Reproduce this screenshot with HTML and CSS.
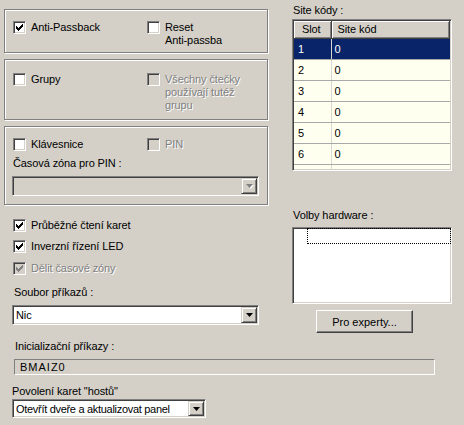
FILE: index.html
```html
<!DOCTYPE html>
<html lang="cs">
<head>
    <meta charset="UTF-8">
    <title>Nastavení čtečky</title>
    <link rel="stylesheet" href="styles.css">
</head>
<body>

<div class="dlg">
    <div class="top">
        <div class="left">
            <!-- Anti-Passback -->
            <div class="group g1">
                <div class="chk w134">
                    <span class="cb"><svg width="7" height="7" viewBox="0 0 7 7"><path d="M0 2h1v3H0zM1 3h1v3H1zM2 4h1v3H2zM3 3h1v3H3zM4 2h1v3H4zM5 1h1v3H5zM6 0h1v3H6z"/></svg></span>
                    <span>Anti-Passback</span>
                </div>
                <div class="chk">
                    <span class="cb"></span>
                    <span>Reset<br>Anti-passba</span>
                </div>
            </div>

            <!-- Grupy -->
            <div class="group g2">
                <div class="chk w134">
                    <span class="cb"></span>
                    <span>Grupy</span>
                </div>
                <div class="chk off">
                    <span class="cb"></span>
                    <span>Všechny čtečky<br>používají tutéž<br>grupu</span>
                </div>
            </div>

            <!-- Klávesnice -->
            <div class="group g3">
                <div class="row">
                    <div class="chk w134">
                        <span class="cb"></span>
                        <span>Klávesnice</span>
                    </div>
                    <div class="chk off">
                        <span class="cb"></span>
                        <span>PIN</span>
                    </div>
                </div>
                <div class="lbl pin-lbl">Časová zóna pro PIN :</div>
                <div class="combo off pin-combo">
                    <span class="val"></span>
                    <span class="drop"><svg width="7" height="4" viewBox="0 0 7 4"><path d="M0 0h7L3.5 4z"/></svg></span>
                </div>
            </div>

            <div class="opts">
                <div class="chk">
                    <span class="cb"><svg width="7" height="7" viewBox="0 0 7 7"><path d="M0 2h1v3H0zM1 3h1v3H1zM2 4h1v3H2zM3 3h1v3H3zM4 2h1v3H4zM5 1h1v3H5zM6 0h1v3H6z"/></svg></span>
                    <span>Průběžné čtení karet</span>
                </div>
                <div class="chk">
                    <span class="cb"><svg width="7" height="7" viewBox="0 0 7 7"><path d="M0 2h1v3H0zM1 3h1v3H1zM2 4h1v3H2zM3 3h1v3H3zM4 2h1v3H4zM5 1h1v3H5zM6 0h1v3H6z"/></svg></span>
                    <span>Inverzní řízení LED</span>
                </div>
                <div class="chk off last">
                    <span class="cb"><svg width="7" height="7" viewBox="0 0 7 7"><path d="M0 2h1v3H0zM1 3h1v3H1zM2 4h1v3H2zM3 3h1v3H3zM4 2h1v3H4zM5 1h1v3H5zM6 0h1v3H6z"/></svg></span>
                    <span>Dělit časové zóny</span>
                </div>
            </div>

            <div class="lbl soubor-lbl">Soubor příkazů :</div>
            <div class="combo nic-combo">
                <span class="val">Nic</span>
                <span class="drop"><svg width="7" height="4" viewBox="0 0 7 4"><path d="M0 0h7L3.5 4z"/></svg></span>
            </div>
        </div>

        <div class="right">
            <div class="lbl site-lbl">Site kódy :</div>
            <div class="grid">
                <table>
                    <thead>
                        <tr><th class="c1">Slot</th><th>Site kód</th></tr>
                    </thead>
                    <tbody>
                        <tr class="sel"><td class="c1">1</td><td>0</td></tr>
                        <tr><td class="c1">2</td><td>0</td></tr>
                        <tr><td class="c1">3</td><td>0</td></tr>
                        <tr><td class="c1">4</td><td>0</td></tr>
                        <tr><td class="c1">5</td><td>0</td></tr>
                        <tr><td class="c1">6</td><td>0</td></tr>
                        <tr><td class="c1"></td><td></td></tr>
                    </tbody>
                </table>
            </div>

            <div class="lbl hw-lbl">Volby hardware :</div>
            <div class="listbox">
                <div class="focus"></div>
            </div>
            <button class="btn">Pro experty...</button>
        </div>
    </div>

    <div class="bottom">
        <div class="lbl init-lbl">Inicializační příkazy :</div>
        <div class="static">BMAIZ0</div>
        <div class="lbl host-lbl">Povolení karet "hostů"</div>
        <div class="combo host-combo">
            <span class="val">Otevřít dveře a aktualizovat panel</span>
            <span class="drop"><svg width="7" height="4" viewBox="0 0 7 4"><path d="M0 0h7L3.5 4z"/></svg></span>
        </div>
    </div>
</div>

</body>
</html>
```

FILE: styles.css
```css
body { margin: 0; background: #d4d0c8; font: 11px "Liberation Sans", Arial, sans-serif; color: #000; letter-spacing: -0.1px; }
.dlg { width: 464px; height: 425px; overflow: hidden; }
.top { display: grid; grid-template-columns: 292px 160px; align-items: start; }
.left { padding-left: 4px; }
.lbl { line-height: 13px; white-space: nowrap; }

/* group boxes */
.group { width: 264px; box-sizing: border-box; border: 1px solid #808080; box-shadow: 1px 1px 0 #fff, inset 1px 1px 0 #fff; display: flex; align-items: flex-start; }
.g1 { margin-top: 9px; height: 44px; padding: 11px 0 0 8px; }
.g2 { margin-top: 6px; height: 61px; padding: 13px 0 0 8px; }
.g3 { margin-top: 6px; height: 79px; padding: 11px 0 0 8px; flex-direction: column; }
.row { display: flex; }
.w134 { width: 134px; }

/* checkboxes */
.chk { display: flex; align-items: flex-start; gap: 5px; line-height: 13px; }
.cb { width: 13px; height: 13px; box-sizing: border-box; flex: none; padding: 2px; border: 1px solid; border-color: #808080 #fff #fff #808080; box-shadow: inset 1px 1px 0 #404040, inset -1px -1px 0 #d4d0c8; background: #fff; }
.cb svg { display: block; fill: #000; }
.off { color: #808080; text-shadow: 1px 1px 0 #fff; }
.off .cb { background: #d4d0c8; }
.off .cb svg { fill: #808080; }

.pin-lbl { margin-top: 6px; margin-left: 0; }
.opts { margin: 14px 0 0 9px; display: flex; flex-direction: column; gap: 8px; }
.opts .last { margin-top: 1px; }
.soubor-lbl { margin: 11px 0 0 10px; }

/* combo boxes */
.combo { display: flex; align-items: stretch; box-sizing: border-box; height: 20px; padding: 1px; border: 1px solid; border-color: #808080 #fff #fff #808080; box-shadow: inset 1px 1px 0 #404040, inset -1px -1px 0 #d4d0c8; background: #fff; }
.combo .val { flex: 1; padding: 1px 0 0 2px; line-height: 15px; white-space: nowrap; overflow: hidden; }
.combo .drop { width: 16px; box-sizing: border-box; display: flex; align-items: center; justify-content: center; border: 1px solid; border-color: #d4d0c8 #404040 #404040 #d4d0c8; box-shadow: inset 1px 1px 0 #fff, inset -1px -1px 0 #808080; background: #d4d0c8; }
.combo .drop svg { display: block; fill: #000; }
.combo.off { background: #d4d0c8; text-shadow: none; }
.combo.off .drop svg { fill: #808080; filter: drop-shadow(1px 1px 0 #fff); }
.pin-combo { margin: 6px 0 0 -1px; width: 247px; }
.nic-combo { margin: 6px 0 0 8px; width: 247px; }

/* site codes grid */
.right { display: flex; flex-direction: column; align-items: flex-start; }
.site-lbl { margin-top: 4px; margin-left: 1px; }
.grid { margin-top: 2px; width: 160px; height: 152px; box-sizing: border-box; overflow: hidden; border: 1px solid; border-color: #808080 #fff #fff #808080; box-shadow: inset 1px 1px 0 #404040, inset -1px -1px 0 #d4d0c8; padding: 1px; background: #fffff0; }
.grid table { width: 156px; border-collapse: collapse; table-layout: fixed; }
.grid th { height: 17px; box-sizing: border-box; padding: 0 0 0 6px; font-weight: normal; text-align: left; background: #d4d0c8; border-right: 1px solid #404040; border-bottom: 1px solid #404040; box-shadow: inset 1px 1px 0 #fff, inset -1px -1px 0 #808080; line-height: 15px; }
.grid th.c1 { width: 37px; padding-left: 8px; }
.grid td { height: 21px; box-sizing: border-box; padding: 0 0 0 3px; border-bottom: 1px solid #a8a8a8; line-height: 20px; }
.grid td.c1 { padding-left: 4px; border-right: 1px solid #d8d8d0; }
.grid tr.sel td { background: #0a246a; color: #fff; }

/* hardware list */
.hw-lbl { margin-top: 38px; margin-left: 1px; }
.listbox { margin-top: 5px; width: 160px; height: 77px; box-sizing: border-box; border: 1px solid; border-color: #808080 #fff #fff #808080; box-shadow: inset 1px 1px 0 #404040, inset -1px -1px 0 #d4d0c8; background: #fff; padding: 0 0 0 14px; }
.focus { height: 16px; border: 1px dotted #000; box-sizing: border-box; }
.btn { margin: 6px 0 0 24px; width: 97px; height: 23px; padding: 0; font: inherit; color: #000; background: #d4d0c8; border: 1px solid; border-color: #fff #404040 #404040 #fff; box-shadow: inset -1px -1px 0 #808080, inset 1px 1px 0 #d4d0c8; }

/* bottom part */
.init-lbl { margin: 7px 0 0 15px; }
.static { margin: 6px 0 0 14px; width: 421px; height: 16px; box-sizing: border-box; border: 1px solid; border-color: #808080 #fff #fff #808080; padding-left: 5px; line-height: 14px; letter-spacing: 1px; }
.host-lbl { margin: 10px 0 0 12px; }
.host-combo { margin: 1px 0 0 12px; width: 194px; height: 19px; }
.host-combo .val { letter-spacing: -0.3px; }
```
